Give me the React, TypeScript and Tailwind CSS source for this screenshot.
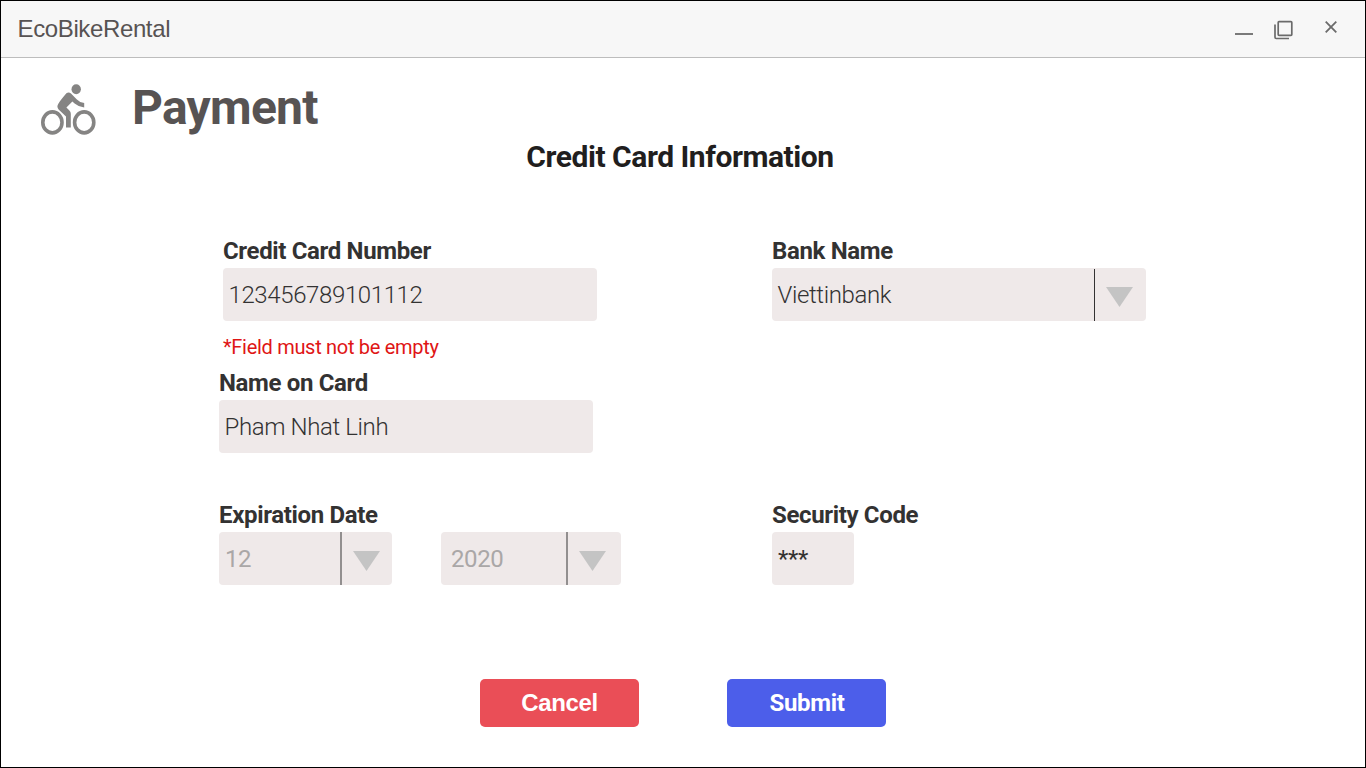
import type { ReactNode } from "react";

function BikeIcon() {
  return (
    <svg width="56" height="53" viewBox="40 83 56 53" className="shrink-0" fill="#858483">
      <ellipse cx="52.4" cy="122.4" rx="9.6" ry="10.5" fill="none" stroke="#858483" strokeWidth="3.6" />
      <ellipse cx="84.2" cy="122.4" rx="9.6" ry="10.5" fill="none" stroke="#858483" strokeWidth="3.6" />
      <ellipse cx="76.2" cy="89.2" rx="4.7" ry="5" />
      <path d="M66.4 93.2Q68.8 91.8 71 93.4L76.6 99.2Q79.8 102.6 84.2 103V107.4Q78.6 106.8 74.6 103.4L72.4 101.4L66.4 107.6L69.4 110.6Q70.8 112 70.8 113.8V127.4H66V116.4L58.6 109.4Q56.4 106.8 58.2 104Q59.2 101.6 66.4 93.2Z" />
    </svg>
  );
}

function WindowControls() {
  return (
    <svg width="104" height="24" viewBox="1235 16 104 24" fill="none" stroke="#6b6b6b">
      <path d="M1235 34H1253" strokeWidth="1.8" />
      <rect x="1278.2" y="21.7" width="13.6" height="13.6" rx="0.8" strokeWidth="1.7" />
      <path d="M1275 24.5V37.2Q1275 38.5 1276.2 38.5H1289" strokeWidth="1.7" />
      <path d="M1325.7 21.7L1336.3 32.3M1336.3 21.7L1325.7 32.3" strokeWidth="1.8" />
    </svg>
  );
}

function Label({ children }: { children: ReactNode }) {
  return <div className="mb-[3px] h-7 whitespace-nowrap text-2xl leading-7 font-bold tracking-[-0.35px] text-[#333232]">{children}</div>;
}

function Arrow() {
  return (
    <svg width="27" height="20" viewBox="0 0 27 20" className="mt-1" fill="#c4c4c4">
      <path d="M0 0H27L13.5 20Z" />
    </svg>
  );
}

const box = "flex h-[53px] items-center rounded-[4px] bg-[#efe9e9] text-2xl leading-7 tracking-[-0.38px] text-[#333232]";

export default function App() {
  return (
    <div className="flex h-[768px] w-[1366px] flex-col overflow-hidden border border-black bg-white font-[Roboto,sans-serif]">
      <header className="flex h-[57px] shrink-0 items-start justify-between border-b border-[#bdbdbd] bg-[#f7f7f7] pr-[26px] pl-[16.5px]">
        <span className="mt-[14px] font-['Liberation_Sans',Arial,sans-serif] text-2xl leading-7 tracking-[-0.37px] text-[#575353]">EcoBikeRental</span>
        <div className="mt-[15px]"><WindowControls /></div>
      </header>

      <div className="flex h-[81px] shrink-0 pl-[39px]">
        <div className="mt-[25px]"><BikeIcon /></div>
        <h1 className="mt-[22px] ml-[36px] text-5xl leading-[56px] font-bold tracking-[-0.72px] text-[#575353]">Payment</h1>
      </div>
      <h2 className="pr-[6px] text-center text-[30px] leading-9 font-bold tracking-[-0.46px] text-[#211e1e]">Credit Card Information</h2>

      <main className="mt-[62px] grid grid-cols-[553px_1fr] pl-[218px]">
        <section className="h-[132px] pl-1">
          <Label>Credit Card Number</Label>
          <div className={`${box} w-[374px] pl-[5.5px] font-light`}>123456789101112</div>
          <p className="mt-[14px] text-xl leading-6 tracking-[-0.3px] text-[#df1515]">*Field must not be empty</p>
        </section>
        <section>
          <Label>Bank Name</Label>
          <div className={`${box} w-[374px] pl-[5.5px] font-light`}>
            <span className="flex-1">Viettinbank</span>
            <span className="mt-px flex h-[52px] w-[52px] items-center border-l border-[#333232] pb-px pl-[11px]"><Arrow /></span>
          </div>
        </section>
        <section className="col-span-2 h-[132px]">
          <Label>Name on Card</Label>
          <div className={`${box} w-[374px] pl-[5.5px] font-light`}>Pham Nhat Linh</div>
        </section>
        <section>
          <Label>Expiration Date</Label>
          <div className="flex gap-[49px]">
            <div className={`${box} w-[173px] pl-[6px]`}>
              <span className="flex-1 text-[#aaa7a7]">12</span>
              <span className="flex h-full w-[52px] items-center border-l-2 border-[#928f8f] pl-[11px]"><Arrow /></span>
            </div>
            <div className={`${box} w-[180px] pl-[10px]`}>
              <span className="flex-1 text-[#aaa7a7]">2020</span>
              <span className="flex h-full w-[55px] items-center border-l-2 border-[#928f8f] pl-[11px]"><Arrow /></span>
            </div>
          </div>
        </section>
        <section>
          <Label>Security Code</Label>
          <div className={`${box} w-[82px] pl-[6px]`}>***</div>
        </section>
      </main>

      <div className="mt-[94px] flex gap-[88px] pl-[479px]">
        <button className="h-12 w-[159px] rounded-[5px] bg-[#ea4e57] font-['Liberation_Sans',Arial,sans-serif] text-2xl font-bold tracking-[-0.37px] text-white">Cancel</button>
        <button className="h-12 w-[159px] rounded-[5px] bg-[#4c5eea] pl-px text-2xl font-bold tracking-[-0.35px] text-white">Submit</button>
      </div>
    </div>
  );
}
